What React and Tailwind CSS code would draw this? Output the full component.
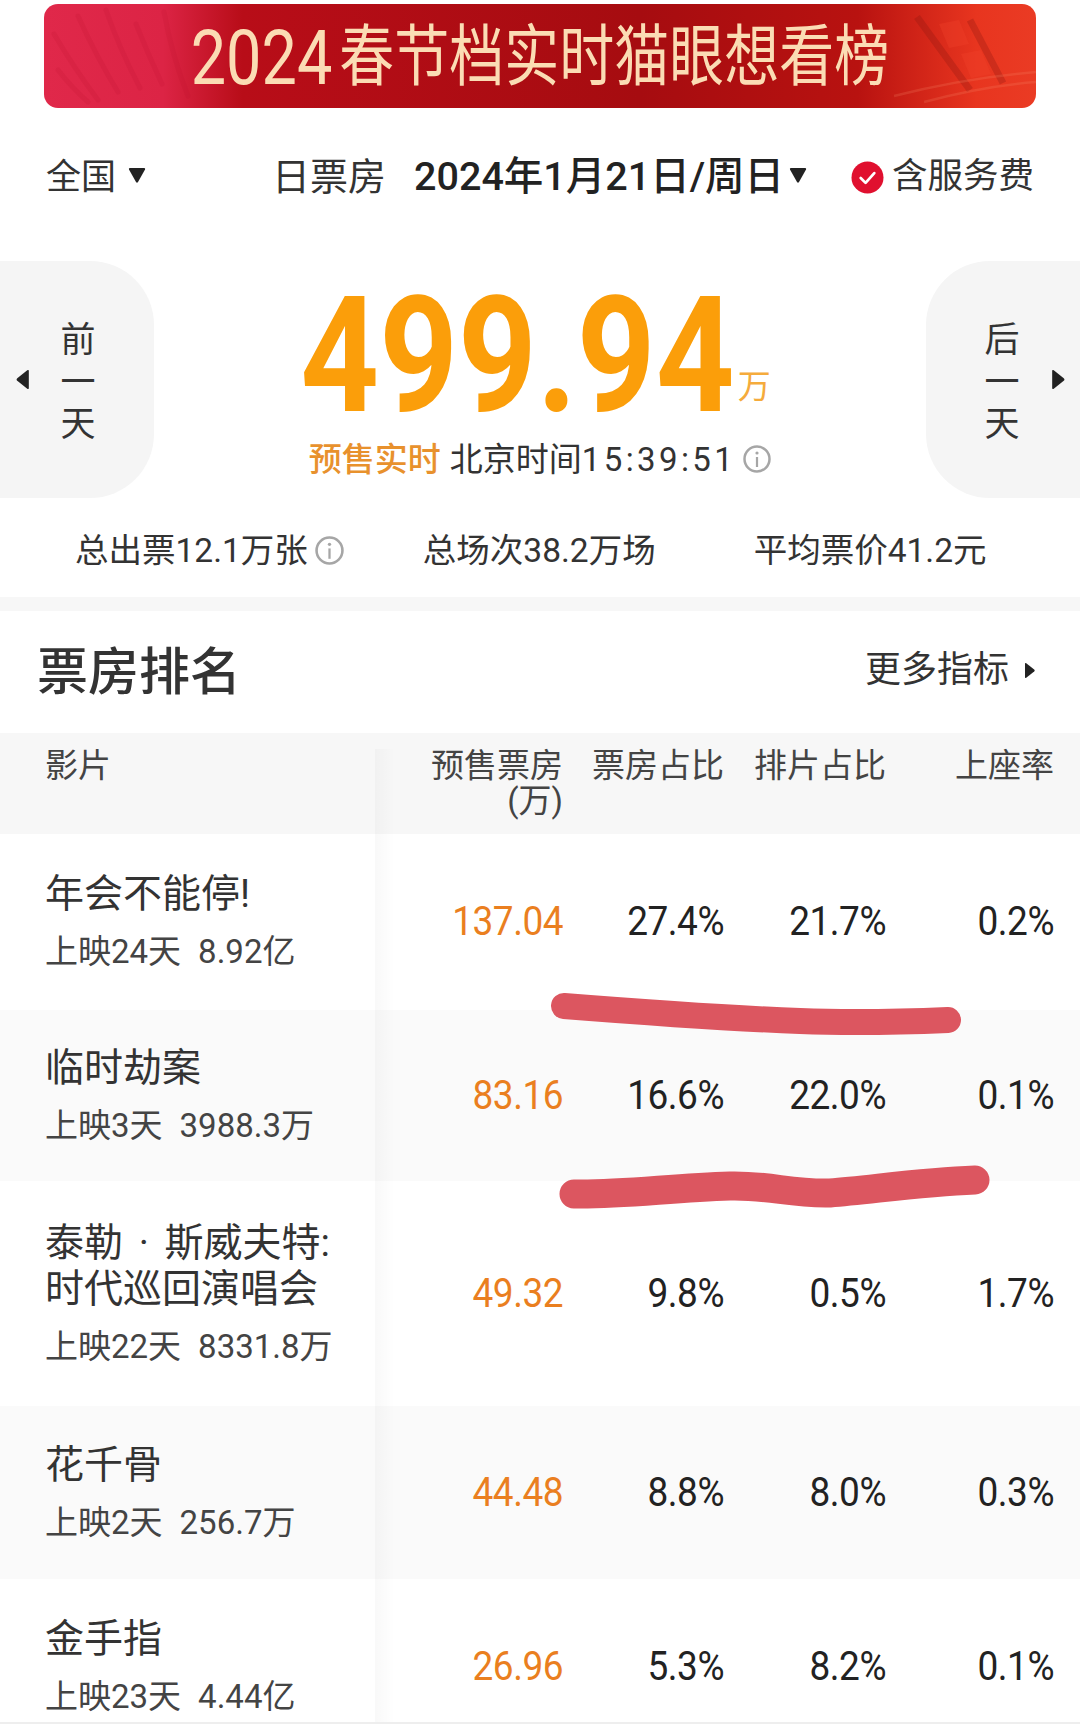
import React from 'react';

const FONT = 'font-["Roboto","Noto_Sans_CJK_SC",sans-serif]';

const movies = [
  { title: ['年会不能停!'], sub: '上映24天', gross: '8.92亿', sale: '137.04', a: '27.4%', b: '21.7%', c: '0.2%', h: 'h-[176px]', bg: 'bg-white' },
  { title: ['临时劫案'], sub: '上映3天', gross: '3988.3万', sale: '83.16', a: '16.6%', b: '22.0%', c: '0.1%', h: 'h-[171px]', bg: 'bg-[#fafafa]' },
  { title: ['泰勒 · 斯威夫特:', '时代巡回演唱会'], sub: '上映22天', gross: '8331.8万', sale: '49.32', a: '9.8%', b: '0.5%', c: '1.7%', h: 'h-[225px]', bg: 'bg-white' },
  { title: ['花千骨'], sub: '上映2天', gross: '256.7万', sale: '44.48', a: '8.8%', b: '8.0%', c: '0.3%', h: 'h-[173px]', bg: 'bg-[#fafafa]' },
  { title: ['金手指'], sub: '上映23天', gross: '4.44亿', sale: '26.96', a: '5.3%', b: '8.2%', c: '0.1%', h: 'h-[176px]', bg: 'bg-white' },
];

const COLS = 'grid grid-cols-[375px_188px_161px_162px_168px]';

function Caret({ dir, className }) {
  const d = {
    down: 'M2 3h14q1.500 0 1 1.500L10 17q-1 1.500-2 0L1 4.500Q.5 3 2 3z',
    left: 'M13 1v16q0 1.500-1.500.8L2 10.200q-1.200-1.200 0-2.400L11.500.2Q13-.5 13 1z',
    right: 'M1 1v16q0 1.500 1.500.8L12 10.200q1.200-1.200 0-2.400L2.500.2Q1-.5 1 1z',
  }[dir];
  return (
    <svg viewBox={dir === 'down' ? '0 0 18 18' : '0 0 14 18'} className={className} fill="#222">
      <path d={d} />
    </svg>
  );
}

function Info({ className }) {
  return (
    <svg viewBox="0 0 28 28" className={className} fill="none">
      <circle cx="14" cy="14" r="12.500" stroke="#a6a6a6" strokeWidth="2.500" />
      <circle cx="14" cy="8" r="1.600" fill="#a6a6a6" />
      <path d="M14 12v10" stroke="#a6a6a6" strokeWidth="2.200" />
    </svg>
  );
}

function DayButton({ side, label }) {
  const left = side === 'left';
  return (
    <div className={`relative w-[154px] h-[237px] bg-[#f5f5f5] flex flex-col items-center text-[35px] leading-none text-[#333] pt-[62px] gap-[7px] ${left ? 'rounded-r-[64px] pl-[2px]' : 'rounded-l-[64px] pr-[2px]'}`}>
      <span className="h-[35px]">{label}</span>
      <span className="h-[35px]">一</span>
      <span className="h-[35px]">天</span>
      <Caret dir={left ? 'left' : 'right'} className={`absolute top-[109px] w-[15px] h-[19px] ${left ? 'left-[15px]' : 'right-[14px]'}`} />
    </div>
  );
}

function Banner() {
  return (
    <div className="relative mx-[44px] h-[104px] rounded-[14px] overflow-hidden bg-[linear-gradient(90deg,#e0284a_0%,#dc2445_12%,#b80d18_20%,#a60c10_60%,#b81210_82%,#e8351f_94%,#ea3b24_100%)] flex items-center justify-center">
      <svg viewBox="0 0 992 104" className="absolute inset-0 w-full h-full" fill="none">
        <g stroke="#b80f2c" strokeOpacity="0.14" strokeWidth="5" strokeLinecap="round">
          <path d="M10 30q20 34 44 66M34 12q18 40 40 76M62 6q14 40 34 78M92 20q12 30 26 60M120 8q8 44 24 84M14 66q14 18 30 32" />
        </g>
        <path d="M873 13l53 73M926 16l33 63" stroke="#8f1610" strokeOpacity="0.3" strokeWidth="7" />
        <g fill="#f0412c" fillOpacity="0.35">
          <path d="M895 20l20-4 10 24-20 4z" />
          <path d="M917 50l20-4 10 24-20 4z" />
        </g>
        <path d="M850 92q70-18 142-24M880 98q60-16 112-20" stroke="#f58a6a" strokeOpacity="0.22" strokeWidth="2.500" />
      </svg>
      <span className="relative flex items-center text-[55px] leading-none text-[#fbdcb4] scale-y-[1.22] mt-[2px]">
        <span className="text-[63px] mr-[7px]">2024</span>春节档实时猫眼想看榜
      </span>
    </div>
  );
}

function MovieRow({ m }) {
  return (
    <div className={`${COLS} ${m.h} ${m.bg} items-center text-right text-[37px] tracking-[-0.5px] text-[#222]`}>
      <div className="text-left pl-[45px] pb-[3px] text-[#333] tracking-normal">
        {m.title.map((t) => (
          <div key={t} className="text-[39px] leading-[46px] [word-spacing:6px]">{t}</div>
        ))}
        <div className="text-[33px] leading-[36px] mt-[17px] text-[#444] flex gap-[17px]">
          <span>{m.sub}</span>
          <span>{m.gross}</span>
        </div>
      </div>
      <div className="text-[#ea7f1f] scale-y-[1.12]">{m.sale}</div>
      <div className="scale-y-[1.12]">{m.a}</div>
      <div className="scale-y-[1.12]">{m.b}</div>
      <div className="scale-y-[1.12]">{m.c}</div>
    </div>
  );
}

export default function App() {
  return (
    <div className={`${FONT} relative w-[1080px] h-[1724px] overflow-hidden bg-white pt-[4px]`}>
      <Banner />

      {/* 筛选行 */}
      <div className="flex items-center h-[56px] mt-[41px] pl-[46px] text-[#333]">
        <span className="text-[35px] leading-none">全国</span>
        <Caret dir="down" className="w-[18px] h-[18px] ml-[12px] -mt-[6px]" />
        <span className="text-[38px] leading-none ml-[126px]">日票房</span>
        <span className="text-[39.500px] leading-none ml-[28px] font-medium text-[#222]">2024年1月21日/周日</span>
        <Caret dir="down" className="w-[18px] h-[18px] ml-[5px] -mt-[6px]" />
        <svg viewBox="0 0 34 34" className="w-[33px] h-[33px] ml-[44px]">
          <circle cx="17" cy="17" r="16.500" fill="#e0102f" />
          <path d="M10 17.500l5 5 9-10" stroke="#fff" strokeWidth="2.800" fill="none" strokeLinecap="round" strokeLinejoin="round" />
        </svg>
        <span className="text-[35.500px] leading-none ml-[8px]">含服务费</span>
      </div>

      {/* 大盘数字 */}
      <div className="flex justify-between mt-[56px]">
        <DayButton side="left" label="前" />
        <div className="flex-1 flex flex-col items-center">
          <div className="flex items-end h-[170px] pt-[20px] pr-[9px]">
            <span className="text-[137.500px] font-bold leading-[110px] mb-[20px] text-[#fb9e0a] scale-y-[1.17]">499.94</span>
            <span className="text-[33px] leading-none text-[#f5ab3c] ml-[3px] mb-[28px]">万</span>
          </div>
          <div className="flex items-center h-[44px] mt-[6px] text-[33px] leading-none">
            <span className="text-[#e8912d] font-medium">预售实时</span>
            <span className="ml-[9px] text-[#333]">北京时间</span>
            <span className="text-[#333] tracking-[3.400px]">15:39:51</span>
            <Info className="w-[28px] h-[28px] ml-[7px]" />
          </div>
        </div>
        <DayButton side="right" label="后" />
      </div>

      {/* 汇总 */}
      <div className="flex items-center h-[99px] pl-[75px] pt-[6px] text-[33.500px] leading-none text-[#333]">
        <span>总出票12.1万张</span>
        <Info className="w-[29px] h-[29px] ml-[7px]" />
        <span className="ml-[79px]">总场次38.2万场</span>
        <span className="ml-[98px]">平均票价41.2元</span>
      </div>
      <div className="h-[14px] bg-[#f7f7f7]" />

      {/* 榜单标题 */}
      <div className="flex items-center h-[122px] pl-[37px] text-[#333]">
        <span className="text-[51px] leading-none font-medium mt-[1px]">票房排名</span>
        <span className="text-[36px] leading-none ml-auto -mt-[4px]">更多指标</span>
        <Caret dir="right" className="w-[12px] h-[15px] ml-[15px] mr-[44px] -mt-[4px]" />
      </div>

      {/* 表格 */}
      <div className="relative">
        <div className={`${COLS} h-[101px] bg-[#f7f7f7] text-right text-[33px] leading-[35px] text-[#444] pt-[15px]`}>
          <div className="text-left pl-[45px]">影片</div>
          <div>预售票房<br />(万)</div>
          <div>票房占比</div>
          <div>排片占比</div>
          <div>上座率</div>
        </div>
        {movies.map((m) => (
          <MovieRow key={m.sale} m={m} />
        ))}
        <div className="absolute left-[375px] top-[16px] bottom-0 w-[20px] bg-gradient-to-r from-black/[0.025] to-transparent" />
      </div>

      <div className="absolute left-0 right-0 bottom-0 h-[2px] bg-[#eeeeee]" />

      {/* 手写标记 */}
      <svg viewBox="0 0 1080 1724" className="absolute inset-0 w-[1080px] h-[1724px] pointer-events-none" fill="none">
        <path d="M564 1006C640 1012 720 1018 800 1021C850 1023 900 1022 948 1020" stroke="#dc5660" strokeWidth="26" strokeLinecap="round" />
        <path d="M574 1194C620 1195 670 1188 730 1186C770 1185 790 1194 830 1193C870 1190 920 1182 975 1180" stroke="#dc5660" strokeWidth="29" strokeLinecap="round" />
      </svg>
    </div>
  );
}
